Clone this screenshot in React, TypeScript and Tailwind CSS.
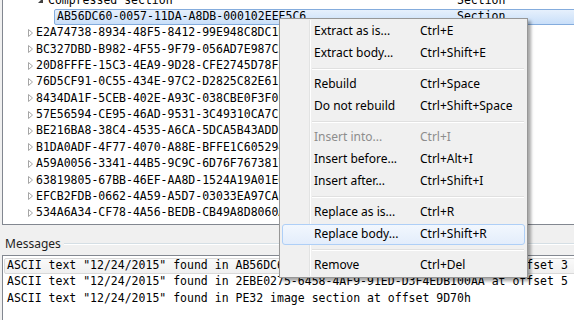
import React from "react";

const mono = { fontFamily: '"DejaVu Sans Mono", "Liberation Mono", monospace' };
const ui = { fontFamily: '"Noto Sans", "Open Sans", sans-serif' };

const guids = [
  "E2A74738-8934-48F5-8412-99E948C8DC1B",
  "BC327DBD-B982-4F55-9F79-056AD7E987C5",
  "20D8FFFE-15C3-4EA9-9D28-CFE2745D78F3",
  "76D5CF91-0C55-434E-97C2-D2825C82E61F",
  "8434DA1F-5CEB-402E-A93C-038CBE0F3F0E",
  "57E56594-CE95-46AD-9531-3C49310CA7CE",
  "BE216BA8-38C4-4535-A6CA-5DCA5B43ADDF",
  "B1DA0ADF-4F77-4070-A88E-BFFE1C605294",
  "A59A0056-3341-44B5-9C9C-6D76F7673817",
  "63819805-67BB-46EF-AA8D-1524A19A01E6",
  "EFCB2FDB-0662-4A59-A5D7-03033EA97CA1",
  "534A6A34-CF78-4A56-BEDB-CB49A8D8060A",
  "D8AAB432-03CC-48D2-9E74-349CCAE02187",
];

function Collapsed() {
  return (
    <svg width="7" height="10" viewBox="0 0 7 10" className="shrink-0">
      <path d="M1.5 1.5 L5.5 5 L1.5 8.5 Z" fill="none" stroke="#a6a6a6" strokeWidth="1" />
    </svg>
  );
}

function Expanded() {
  return (
    <svg width="7" height="7" viewBox="0 0 7 7" className="shrink-0">
      <path d="M6 1 L6 6 L1 6 Z" fill="#404040" />
    </svg>
  );
}

type Item = { label?: string; key?: string; sep?: boolean; disabled?: boolean; hot?: boolean };
const items: Item[] = [
  { label: "Extract as is...", key: "Ctrl+E" },
  { label: "Extract body...", key: "Ctrl+Shift+E" },
  { sep: true },
  { label: "Rebuild", key: "Ctrl+Space" },
  { label: "Do not rebuild", key: "Ctrl+Shift+Space" },
  { sep: true },
  { label: "Insert into...", key: "Ctrl+I", disabled: true },
  { label: "Insert before...", key: "Ctrl+Alt+I" },
  { label: "Insert after...", key: "Ctrl+Shift+I" },
  { sep: true },
  { label: "Replace as is...", key: "Ctrl+R" },
  { label: "Replace body...", key: "Ctrl+Shift+R", hot: true },
  { sep: true },
  { label: "Remove", key: "Ctrl+Del" },
];

export default function App() {
  return (
    <div className="relative w-[574px] h-[320px] overflow-hidden bg-[#f0f0f0] flex flex-col">
      {/* tree */}
      <div className="h-[225px] shrink-0 ml-[2px] border-l border-b border-[#828790] bg-white overflow-hidden text-[11.5px] text-black" style={mono}>
        <div className="-mt-[8px] flex flex-col">
          <div className="h-[16.36px] flex items-center relative">
            <div className="w-[34px] shrink-0" />
            <Expanded />
            <span className="ml-[4px] whitespace-nowrap">Compressed section</span>
            <span className="absolute left-[454px] whitespace-nowrap">Section</span>
          </div>
          <div className="h-[16.36px] flex items-center relative">
            <div className="absolute left-[51px] right-[-10px] top-[1px] bottom-[0px] rounded-[2px] border border-[#84acdd] bg-gradient-to-b from-[#e6f0fc] to-[#c9dff9]" />
            <span className="relative ml-[54px] whitespace-nowrap">AB56DC60-0057-11DA-A8DB-000102EEE5C6</span>
            <span className="absolute left-[454px] whitespace-nowrap">Section</span>
          </div>
          {guids.map((g) => (
            <div key={g} className="h-[16.36px] flex items-center">
              <div className="w-[24px] shrink-0" />
              <Collapsed />
              <span className="ml-[2px] whitespace-nowrap">{g}</span>
            </div>
          ))}
        </div>
      </div>

      {/* Messages label */}
      <div className="h-[30px] shrink-0 flex items-center pt-[7px] pl-[5px]">
        <span className="text-[12px] leading-[16px] text-[#1e1e1e]" style={ui}>Messages</span>
        <div className="flex-1 ml-[3px] flex flex-col">
          <div className="h-px bg-[#d5dfe5]" />
          <div className="h-px bg-white" />
        </div>
      </div>

      {/* Messages list */}
      <div className="flex-1 ml-[2px] border-l border-t border-[#828790] bg-white overflow-hidden text-[11.5px] text-black" style={mono}>
        <div className="flex flex-col pt-[1px]">
          <div className="h-[16.5px] flex items-center relative">
            <div className="absolute left-[1px] right-[-10px] top-[1px] bottom-[0px] rounded-[2px] border border-[#d9d9d9] bg-gradient-to-b from-[#fafafa] to-[#f0f0f0]" />
            <span className="relative ml-[4px] whitespace-nowrap">ASCII text "12/24/2015" found in AB56DC60-0057-11DA-A8DB-000102EEE5C6 at offset 3</span>
          </div>
          <div className="h-[16.5px] flex items-center">
            <span className="ml-[4px] whitespace-nowrap">ASCII text "12/24/2015" found in 2EBE0275-6458-4AF9-91ED-D3F4EDB100AA at offset 5</span>
          </div>
          <div className="h-[16.5px] flex items-center">
            <span className="ml-[4px] whitespace-nowrap">ASCII text "12/24/2015" found in PE32 image section at offset 9D70h</span>
          </div>
        </div>
      </div>

      {/* Context menu */}
      <div
        className="absolute left-[279px] top-[18px] w-[249px] border border-[#979797] bg-[#f0f0f0] py-[1px] px-[1px] shadow-[3px_3px_3px_rgba(0,0,0,0.35)] text-[12px] text-black"
        style={ui}
      >
        <div className="absolute left-[29px] top-[1px] bottom-[1px] w-[2px] flex">
          <div className="w-px bg-[#e2e3e3]" />
          <div className="w-px bg-white" />
        </div>
        <div className="relative flex flex-col">
          {items.map((it, i) =>
            it.sep ? (
              <div key={i} className="h-[9px] flex flex-col justify-center pl-[31px] pr-[2px]">
                <div className="h-px bg-[#e0e0e0]" />
                <div className="h-px bg-white" />
              </div>
            ) : (
              <div key={i} className="h-[22px] relative flex items-center">
                {it.hot && (
                  <div className="absolute left-[1px] right-[1px] top-[1px] bottom-[0px] rounded-[3px] border border-[#aecff7] bg-gradient-to-b from-[#f2f7fe] to-[#e3edfb]" />
                )}
                <span className={"relative ml-[33px] w-[106px] whitespace-nowrap " + (it.disabled ? "text-[#8d8d8d]" : "")}>{it.label}</span>
                <span className={"relative whitespace-nowrap " + (it.disabled ? "text-[#8d8d8d]" : "")}>{it.key}</span>
              </div>
            )
          )}
        </div>
      </div>
    </div>
  );
}
